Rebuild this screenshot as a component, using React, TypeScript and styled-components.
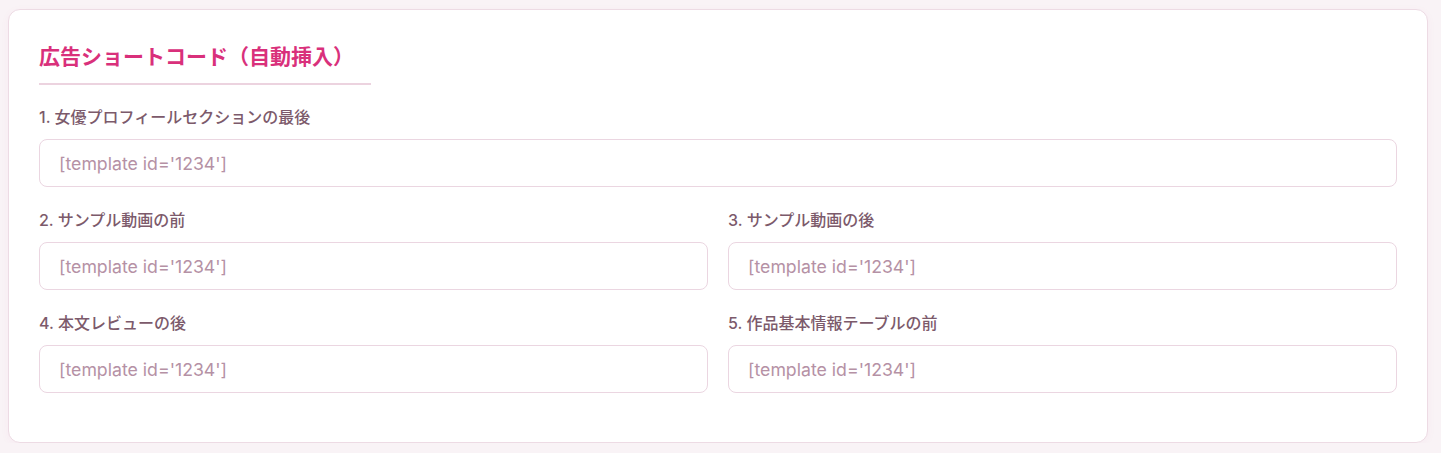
import styled, { createGlobalStyle } from "styled-components";

const GlobalStyle = createGlobalStyle`
  html, body {
    margin: 0;
    padding: 0;
    background: #f9f3f6;
  }
  body {
    font-family: Inter, "Noto Sans CJK JP", "Noto Sans", sans-serif;
  }
`;

const Page = styled.div`
  padding: 9px 0 0 8px;
`;

const Card = styled.section`
  box-sizing: border-box;
  width: 1420px;
  background: #ffffff;
  border: 1px solid #eddbe4;
  border-radius: 12px;
  padding: 30px 30px 49px;
  box-shadow: 0 2px 10px rgba(214, 48, 122, 0.04);
`;

const Title = styled.h2`
  display: inline-block;
  margin: 0 0 19px;
  padding: 0 17px 9px 0;
  font-size: 21px;
  line-height: 34px;
  font-weight: 700;
  color: #d9307b;
  border-bottom: 2px solid #ecd3df;
`;

const Fields = styled.div`
  display: grid;
  grid-template-columns: 1fr 1fr;
  column-gap: 20px;
  row-gap: 20px;
`;

const Field = styled.div<{ $wide?: boolean }>`
  display: flex;
  flex-direction: column;
  grid-column: ${(p) => (p.$wide ? "1 / -1" : "auto")};
`;

const Label = styled.label`
  font-size: 16px;
  line-height: 26px;
  font-weight: 500;
  color: #7c5a6b;
  margin-bottom: 9px;
`;

const Input = styled.input`
  box-sizing: border-box;
  height: 48px;
  width: 100%;
  padding: 0 19px;
  border: 1px solid #ebd6e1;
  border-radius: 8px;
  background: #fff;
  font-family: Inter, "Noto Sans CJK JP", sans-serif;
  font-size: 17.7px;
  color: #5a3f4d;
  outline: none;

  &::placeholder {
    color: #b591a5;
  }
`;

const fields = [
  { label: "1. 女優プロフィールセクションの最後", wide: true },
  { label: "2. サンプル動画の前" },
  { label: "3. サンプル動画の後" },
  { label: "4. 本文レビューの後" },
  { label: "5. 作品基本情報テーブルの前" },
];

export default function App() {
  return (
    <Page>
      <GlobalStyle />
      <Card>
        <Title>広告ショートコード（自動挿入）</Title>
        <Fields>
          {fields.map((f, i) => (
            <Field key={i} $wide={f.wide}>
              <Label htmlFor={`ad-${i}`}>{f.label}</Label>
              <Input id={`ad-${i}`} placeholder="[template id='1234']" />
            </Field>
          ))}
        </Fields>
      </Card>
    </Page>
  );
}
